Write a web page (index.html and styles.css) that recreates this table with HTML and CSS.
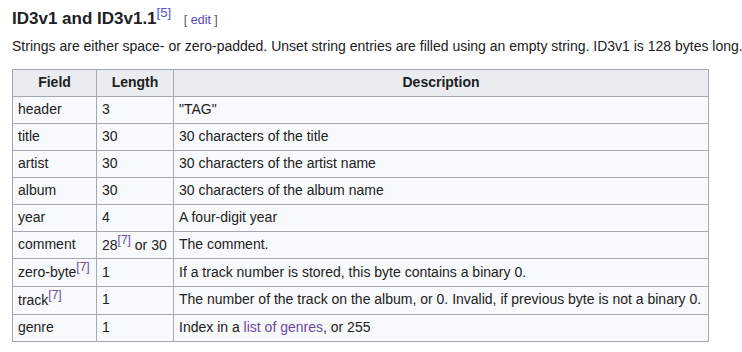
FILE: index.html
```html
<!DOCTYPE html>
<html lang="en">
<head>
    <meta charset="UTF-8">
    <title>ID3v1 and ID3v1.1</title>
    <link rel="stylesheet" href="styles.css">
</head>
<body>
    <div class="section">
        <h3 class="section-title">
            <span class="headline">ID3v1 and ID3v1.1<sup class="ref ref-big"><a href="#">[5]</a></sup></span>
            <span class="edit-section">[ <a href="#">edit</a> ]</span>
        </h3>
        <p class="intro">Strings are either space- or zero-padded. Unset string entries are filled using an empty string. ID3v1 is 128 bytes long.</p>
        <table class="wikitable">
            <thead>
                <tr>
                    <th class="col-field">Field</th>
                    <th class="col-length">Length</th>
                    <th>Description</th>
                </tr>
            </thead>
            <tbody>
                <tr><td>header</td><td>3</td><td>"TAG"</td></tr>
                <tr><td>title</td><td>30</td><td>30 characters of the title</td></tr>
                <tr><td>artist</td><td>30</td><td>30 characters of the artist name</td></tr>
                <tr><td>album</td><td>30</td><td>30 characters of the album name</td></tr>
                <tr><td>year</td><td>4</td><td>A four-digit year</td></tr>
                <tr><td>comment</td><td>28<sup class="ref visited"><a href="#">[7]</a></sup> or 30</td><td>The comment.</td></tr>
                <tr><td>zero-byte<sup class="ref visited"><a href="#">[7]</a></sup></td><td>1</td><td>If a track number is stored, this byte contains a binary 0.</td></tr>
                <tr><td>track<sup class="ref visited"><a href="#">[7]</a></sup></td><td>1</td><td>The number of the track on the album, or 0. Invalid, if previous byte is not a binary 0.</td></tr>
                <tr><td>genre</td><td>1</td><td>Index in a <a class="visited-link" href="#">list of genres</a>, or 255</td></tr>
            </tbody>
        </table>
    </div>
</body>
</html>
```

FILE: styles.css
```css
:root {
    --text-color: #202122;
    --link-color: #3366cc;
    --visited-color: #6b4ba1;
    --border-color: #a2a9b1;
    --table-bg: #f8f9fa;
    --header-bg: #eaecf0;
}

* {
    margin: 0;
    padding: 0;
    box-sizing: border-box;
}

body {
    font-family: 'Liberation Sans', Arial, sans-serif;
    color: var(--text-color);
    background: #ffffff;
    padding: 6px 0 0 12px;
}

a {
    text-decoration: none;
    color: var(--link-color);
}

.section-title {
    font-size: 17px;
    font-weight: bold;
    line-height: 24px;
}

.ref {
    font-size: 12px;
    line-height: 1;
    vertical-align: super;
    font-weight: normal;
}

.ref-big {
    font-size: 13px;
}

.ref-big a {
    color: #4b52d6;
}

.ref.visited a,
.visited-link {
    color: var(--visited-color);
}

.edit-section {
    font-size: 12.5px;
    font-weight: normal;
    color: #54595d;
    margin-left: 8px;
}

.edit-section a {
    color: #5a3eb8;
}

.intro {
    font-size: 14px;
    line-height: 22px;
    margin-top: 3px;
    white-space: nowrap;
}

.wikitable {
    margin-top: 12px;
    border-collapse: collapse;
    background: var(--table-bg);
    border: 1px solid var(--border-color);
    font-size: 14px;
    width: 697px;
}

.wikitable th,
.wikitable td {
    border: 1px solid var(--border-color);
    padding: 2px 5px 3px 5px;
    line-height: 21px;
    text-align: left;
    white-space: nowrap;
}

.wikitable th {
    background: var(--header-bg);
    text-align: center;
    font-weight: bold;
}

.col-field {
    width: 84px;
}

.col-length {
    width: 77px;
}
```
